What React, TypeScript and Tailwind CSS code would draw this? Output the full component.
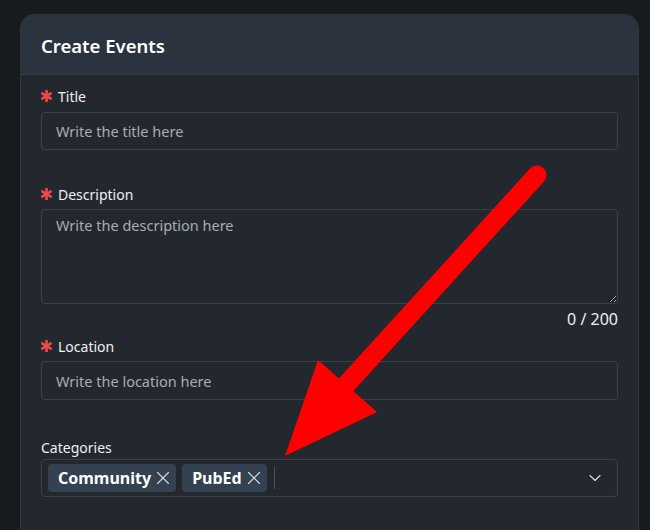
import { ChevronDown, X } from 'lucide-react'

const FONT = { fontFamily: '"Noto Sans", "Open Sans", sans-serif' }

function Asterisk() {
  return (
    <svg width="11" height="12" viewBox="0 0 11 12" className="mr-[6px] shrink-0">
      <g stroke="#f0474c" strokeWidth="2.6" strokeLinecap="butt">
        <line x1="5.5" y1="0" x2="5.5" y2="12" />
        <line x1="0.3" y1="3" x2="10.7" y2="9" />
        <line x1="0.3" y1="9" x2="10.7" y2="3" />
      </g>
    </svg>
  )
}

function Label({ text, required }: { text: string; required?: boolean }) {
  return (
    <div className="flex h-5 items-center text-[14px] text-[#eef0f2]">
      {required && <Asterisk />}
      <span>{text}</span>
    </div>
  )
}

function Tag({ name }: { name: string }) {
  return (
    <span className="flex h-[28px] items-center gap-[1px] rounded-[4px] bg-[#334150] pl-[10px] pr-[2px] text-[16px] font-bold text-white">
      {name}
      <X size={22} strokeWidth={1.2} className="text-[#d6dbe0]" />
    </span>
  )
}

export default function App() {
  return (
    <div className="relative h-[530px] w-[650px] overflow-hidden bg-[#181b1e] pl-5 pt-[14px]" style={FONT}>
      <div className="h-[560px] w-[619px] rounded-t-[14px] border border-[#30363d] bg-[#23282e]">
        <div className="flex h-[60px] items-center rounded-t-[14px] border-b border-[#353c45] bg-[#2b343e] px-5 pt-[3px]">
          <h1 className="text-[18.5px] font-semibold text-white">Create Events</h1>
        </div>

        <div className="px-5 pt-[11px]">
          <Label text="Title" required />
          <input
            placeholder="Write the title here"
            className="mt-[6px] h-[38px] w-full rounded-[4px] border border-[#3a414a] bg-transparent px-[14px] text-[14.5px] text-white placeholder:text-[#a8acb0] focus:outline-none"
          />

          <div className="mt-[34px]">
            <Label text="Description" required />
          </div>
          <textarea
            placeholder="Write the description here"
            className="mt-[5px] block h-[95px] w-full rounded-[4px] border border-[#3a414a] bg-transparent px-[14px] py-[5px] text-[14.5px] text-white placeholder:text-[#a8acb0] focus:outline-none"
          />
          <div className="mt-[4px] text-right text-[16px] leading-[22px] text-[#eef0f2]">0 / 200</div>

          <div className="mt-[6px]">
            <Label text="Location" required />
          </div>
          <input
            placeholder="Write the location here"
            className="mt-[5px] h-[39px] w-full rounded-[4px] border border-[#3a414a] bg-transparent px-[14px] text-[14.5px] text-white placeholder:text-[#a8acb0] focus:outline-none"
          />

          <div className="mt-[37px]">
            <Label text="Categories" />
          </div>
          <div className="mt-[2px] flex h-[38px] w-full items-center rounded-[4px] border border-[#3a414a] pl-[6px] pr-[12px]">
            <div className="flex flex-1 items-center gap-[6px]">
              <Tag name="Community" />
              <Tag name="PubEd" />
              <span className="ml-[1px] h-[22px] w-px bg-[#4a525c]" />
            </div>
            <ChevronDown size={20} strokeWidth={1.4} className="text-[#d6dbe0]" />
          </div>
        </div>
      </div>

      <svg className="pointer-events-none absolute left-0 top-0" width="650" height="530">
        <line x1="537" y1="175" x2="345" y2="386" stroke="#ff0000" strokeWidth="19" strokeLinecap="round" />
        <polygon points="285,456 318,360 377,412" fill="#ff0000" />
      </svg>
    </div>
  )
}
